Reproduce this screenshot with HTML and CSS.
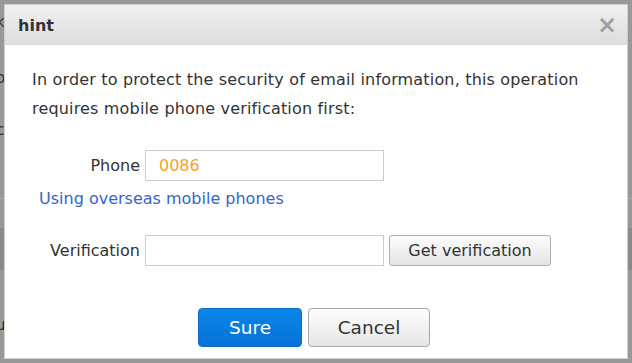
FILE: index.html
```html
<!DOCTYPE html>
<html lang="en">
<head>
<meta charset="UTF-8">
<title>hint</title>
<link rel="stylesheet" href="styles.css">
</head>
<body>

<div class="page-bits">
    <span class="bit bit-k">k</span>
    <span class="bit bit-o">o</span>
    <span class="bit bit-c">c</span>
    <span class="bit bit-u">u</span>
    <div class="bit-line"></div>
    <div class="bit-band"></div>
</div>

<div class="dialog">
    <div class="dialog-head">
        <span class="dialog-title">hint</span>
        <span class="dialog-close">&times;</span>
    </div>
    <div class="dialog-body">
        <p class="intro">In order to protect the security of email information, this operation requires mobile phone verification first:</p>

        <div class="form-row">
            <label class="form-label">Phone</label>
            <input class="form-input phone" type="text" value="0086">
        </div>
        <a class="overseas" href="#">Using overseas mobile phones</a>

        <div class="form-row row-code">
            <label class="form-label">Verification</label>
            <input class="form-input" type="text">
            <button class="btn-get">Get verification</button>
        </div>

        <div class="actions">
            <button class="btn btn-sure">Sure</button>
            <button class="btn btn-cancel">Cancel</button>
        </div>
    </div>
</div>

</body>
</html>
```

FILE: styles.css
```css
/* --- fondo --- */
body {
    margin:0;
    width:632px;
    height:363px;
    background:#999;
    font-family: "DejaVu Sans", Verdana, sans-serif;
    color:#333;
    overflow:hidden;
    position:relative;
}

/* trozos de la pagina de atras */
.bit { position:absolute; left:-4px; font-size:15px; color:#333; }
.bit-k { top:13px; }
.bit-o { top:69px; }
.bit-c { top:121px; }
.bit-u { top:316px; color:#223; }
.bit-line { position:absolute; left:0; top:198px; width:632px; height:1px; background:#aaa; }
.bit-band { position:absolute; left:0; top:228px; width:632px; height:42px; background:#8a8a8a; }

/* --- dialogo --- */
.dialog {
    position:absolute;
    left:4px;
    top:4px;
    width:622px;
    height:353px;
    background:#fff;
    border:1px solid #d0d0d0;
    z-index:1;
}

.dialog-head {
    height:40px;
    display:flex;
    align-items:center;
    justify-content:space-between;
    padding:0 10px 0 13px;
    background:linear-gradient(#f0f0f0, #dcdcdc);
}
.dialog-title { font-weight:bold; font-size:16px; color:#333; }
.dialog-close { font-size:24px; color:#a0a0a0; font-weight:bold; line-height:1; }

.dialog-body { padding:20px 0 0 27px; }

.intro {
    margin:0;
    font-size:16px;
    letter-spacing:0.17px;
    line-height:29px;
    width:580px;
}

.form-row {
    display:flex;
    align-items:center;
    margin-top:27px;
}
.form-label {
    width:108px;
    text-align:right;
    font-size:16px;
    margin-right:5px;
}
.form-input {
    box-sizing:border-box;
    width:239px;
    height:31px;
    border:1px solid #ccc;
    padding:0 13px;
    font-family:inherit;
    font-size:16px;
    outline:none;
}
.phone { color:#f7a12e; }

.overseas {
    display:block;
    margin:7px 0 0 7px;
    line-height:22px;
    color:#3565c8;
    text-decoration:none;
    font-size:16px;
}

.row-code { margin-top:25px; }

.btn-get {
    margin-left:5px;
    height:31px;
    width:162px;
    border:1px solid #b0b0b0;
    border-radius:3px;
    background:linear-gradient(#fdfdfd, #e4e4e4);
    font-family:inherit;
    font-size:16px;
    color:#333;
}

/* --- botones --- */
.actions {
    display:flex;
    justify-content:center;
    gap:6px;
    margin-top:42px;
    padding-right:31px;
}
.btn {
    height:39px;
    border-radius:4px;
    font-family:inherit;
    font-size:18.5px;
}
.btn-sure {
    width:104px;
    border:1px solid #0a6fcf;
    background:linear-gradient(#0a85e8, #0672d6);
    color:#fff;
}
.btn-cancel {
    width:122px;
    border:1px solid #a8a8a8;
    background:linear-gradient(#fdfdfd, #e6e6e6);
    color:#333;
}
```
